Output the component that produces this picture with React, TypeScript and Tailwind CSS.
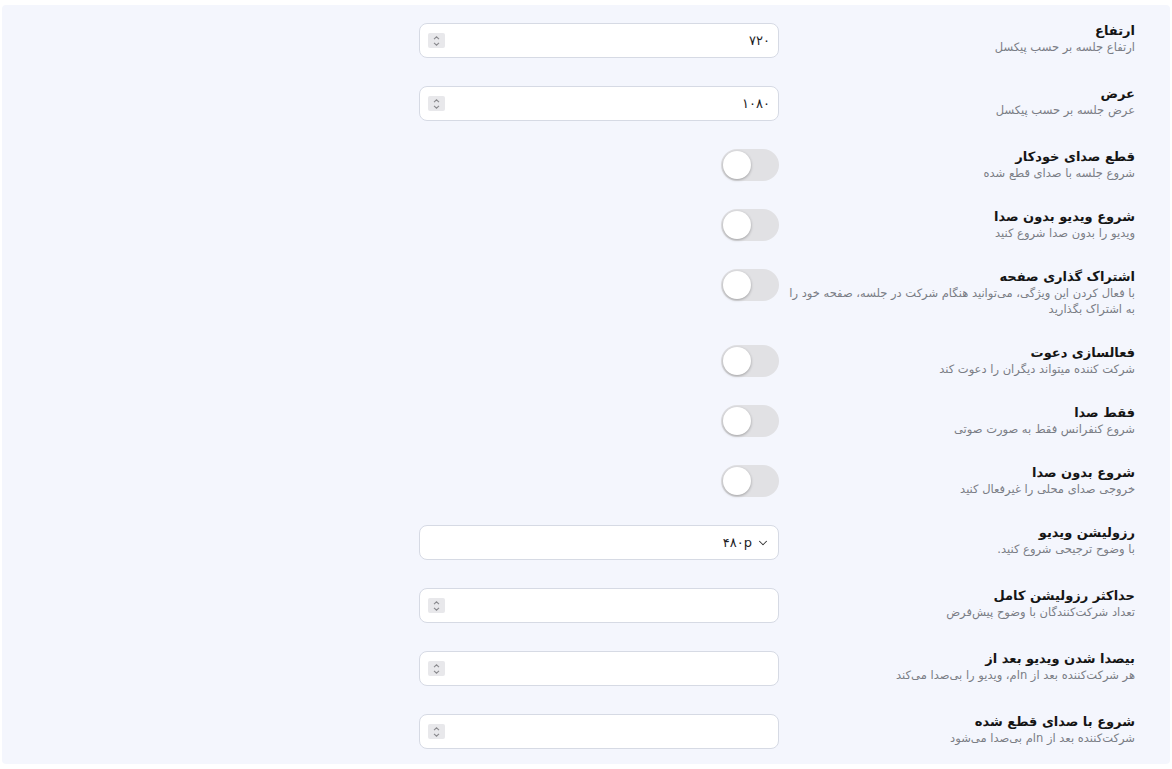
import { ChevronDown } from "lucide-react";

type Setting = {
  title: string;
  desc: string;
  kind: "number" | "toggle" | "select";
  value?: string;
};

const settings: Setting[] = [
  { title: "ارتفاع", desc: "ارتفاع جلسه بر حسب پیکسل", kind: "number", value: "۷۲۰" },
  { title: "عرض", desc: "عرض جلسه بر حسب پیکسل", kind: "number", value: "۱۰۸۰" },
  { title: "قطع صدای خودکار", desc: "شروع جلسه با صدای قطع شده", kind: "toggle" },
  { title: "شروع ویدیو بدون صدا", desc: "ویدیو را بدون صدا شروع کنید", kind: "toggle" },
  {
    title: "اشتراک گذاری صفحه",
    desc: "با فعال کردن این ویژگی، می‌توانید هنگام شرکت در جلسه، صفحه خود را به اشتراک بگذارید",
    kind: "toggle",
  },
  { title: "فعالسازی دعوت", desc: "شرکت کننده میتواند دیگران را دعوت کند", kind: "toggle" },
  { title: "فقط صدا", desc: "شروع کنفرانس فقط به صورت صوتی", kind: "toggle" },
  { title: "شروع بدون صدا", desc: "خروجی صدای محلی را غیرفعال کنید", kind: "toggle" },
  { title: "رزولیشن ویدیو", desc: "با وضوح ترجیحی شروع کنید.", kind: "select", value: "۴۸۰p" },
  { title: "حداکثر رزولیشن کامل", desc: "تعداد شرکت‌کنندگان با وضوح پیش‌فرض", kind: "number" },
  {
    title: "بیصدا شدن ویدیو بعد از",
    desc: "هر شرکت‌کننده بعد از nام، ویدیو را بی‌صدا می‌کند",
    kind: "number",
  },
  { title: "شروع با صدای قطع شده", desc: "شرکت‌کننده بعد از nام بی‌صدا می‌شود", kind: "number" },
];

function Spinner() {
  return (
    <div className="flex h-[15px] w-[17px] flex-col items-center justify-center rounded-[2px] bg-[#e8e8eb]">
      <svg width="9" height="12" viewBox="0 0 9 12" fill="none" stroke="#8a8a8e" strokeWidth="1.1">
        <path d="M2 4.2 4.5 1.8 7 4.2" />
        <path d="M2 7.8 4.5 10.2 7 7.8" />
      </svg>
    </div>
  );
}

function NumberField({ value }: { value?: string }) {
  return (
    <div className="flex h-[35px] w-full items-center justify-between rounded-lg border border-[#d6dae4] bg-white pr-2 pl-2">
      <span className="text-[13px] text-[#1d1d1f]">{value}</span>
      <Spinner />
    </div>
  );
}

function SelectField({ value }: { value?: string }) {
  return (
    <div className="flex h-[35px] w-full items-center gap-1 rounded-lg border border-[#d6dae4] bg-white pr-2">
      <ChevronDown size={14} strokeWidth={1.8} className="text-[#333]" />
      <span className="text-[13px] text-[#1d1d1f]">{value}</span>
    </div>
  );
}

function Toggle() {
  return (
    <div className="flex h-8 w-[58px] items-center justify-end rounded-full bg-[#e1e1e4] px-[2px]">
      <div className="h-7 w-7 rounded-full bg-white shadow-[0_1px_3px_rgba(0,0,0,0.3)]" />
    </div>
  );
}

export default function App() {
  return (
    <div
      className="min-h-screen bg-white px-[2px] pt-[5px]"
      style={{ fontFamily: '"DejaVu Sans", sans-serif' }}
    >
      <div
        dir="rtl"
        className="flex h-[759px] flex-col gap-7 overflow-hidden rounded-sm bg-[#f4f6fd] pt-[18px] pr-[35px]"
      >
        {settings.map((s, i) => (
          <div key={i} className="flex items-start gap-[6px]">
            <div className="w-[350px]">
              <p className="text-[13px] leading-4 font-bold text-[#151515]">{s.title}</p>
              <p className="text-[11.5px] leading-4 text-[#7a7d85]">{s.desc}</p>
            </div>
            <div className="flex w-[360px]">
              {s.kind === "number" && <NumberField value={s.value} />}
              {s.kind === "select" && <SelectField value={s.value} />}
              {s.kind === "toggle" && <Toggle />}
            </div>
          </div>
        ))}
      </div>
    </div>
  );
}
